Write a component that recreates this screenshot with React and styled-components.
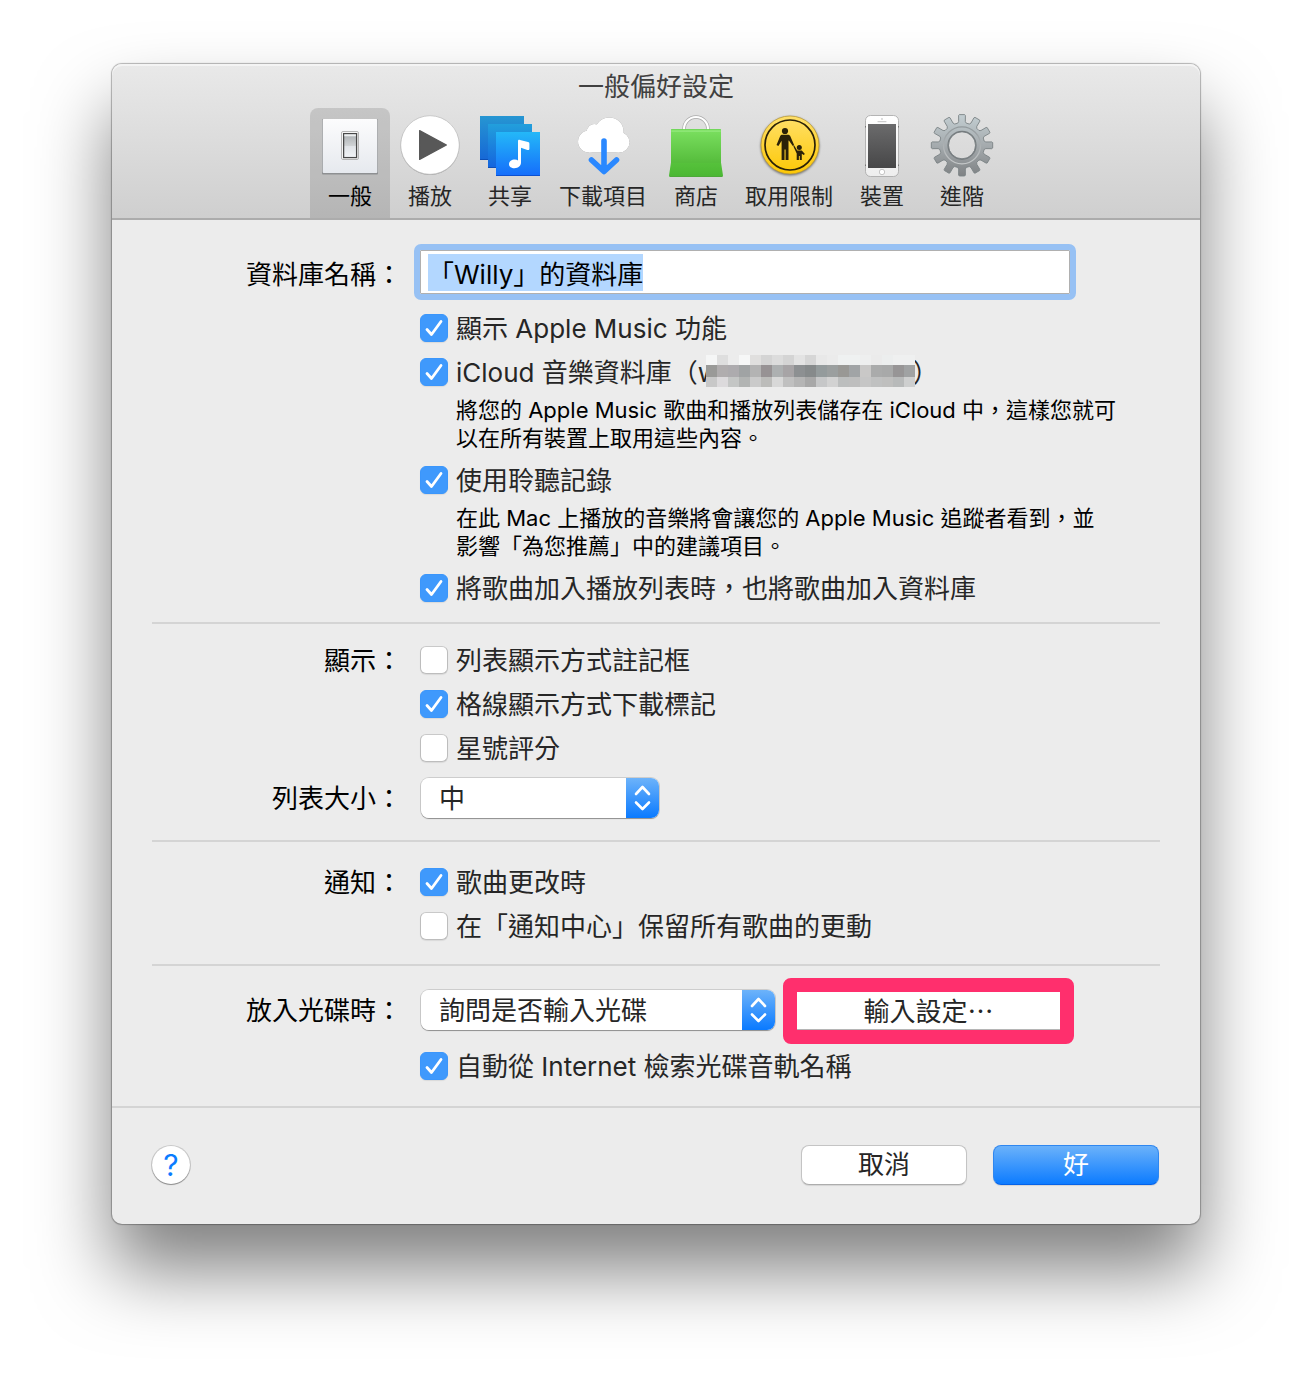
import React, { useEffect, useRef } from "react";
import styled, { createGlobalStyle, css } from "styled-components";

const GlobalStyle = createGlobalStyle`
  *, *::before, *::after { box-sizing: border-box; }
  body {
    margin: 0;
    background: #fff;
    font-family: Inter, "Noto Sans CJK TC", sans-serif;
    font-size: 26px;
    color: #262626;
  }
  button, input, select { font: inherit; color: inherit; }
`;

const Desktop = styled.div`
  padding: 64px 112px 160px;
`;

const Window = styled.main`
  border-radius: 10px;
  background: #ececec;
  box-shadow:
    0 0 1px 1px rgba(0, 0, 0, 0.28),
    0 46px 74px rgba(0, 0, 0, 0.5);
`;

const Header = styled.header`
  border-radius: 10px 10px 0 0;
  border-bottom: 2px solid #acacac;
  background: linear-gradient(#e9e9e9, #cfcfcf);
  box-shadow: inset 0 2px 0 #f4f4f4;
`;

const Title = styled.h1`
  margin: 0;
  height: 44px;
  line-height: 46px;
  font-size: 26px;
  font-weight: 400;
  text-align: center;
  color: #404040;
`;

const Toolbar = styled.nav`
  display: flex;
  justify-content: center;
`;

const Tab = styled.button`
  display: flex;
  flex-direction: column;
  align-items: center;
  min-width: 80px;
  height: 110px;
  padding: 6px 9px 4px;
  border: 0;
  border-radius: 8px 8px 0 0;
  background: ${(p) => (p.$active ? "rgba(0, 0, 0, 0.12)" : "transparent")};
  color: ${(p) => (p.$active ? "#000" : "#262626")};
  font-size: 22px;
  line-height: 36px;
  white-space: nowrap;
`;

const Icon = styled.svg`
  display: block;
  flex: none;
  width: 64px;
  height: 64px;
  margin: 0 -1px;
  overflow: visible;
`;

const Section = styled.section`
  display: grid;
  grid-template-columns: 250px minmax(0, 1fr);
  gap: 8px 18px;
  margin: 0 40px;
  padding: ${(p) => p.$pad};
  border-bottom: ${(p) => (p.$last ? "0" : "2px solid #d4d4d4")};
`;

const rowLabel = css`
  margin: 1px 0 -1px;
  line-height: ${(p) => p.$h}px;
  text-align: right;
  color: #000;
  white-space: nowrap;
`;
const RowLabel = styled.label`
  ${rowLabel}
`;
const RowTitle = styled.span`
  ${rowLabel}
`;

const Stack = styled.div`
  display: flex;
  flex-direction: column;
`;

const NameField = styled.input`
  width: 100%;
  max-width: 650px;
  height: 44px;
  margin: 0 0 12px;
  padding: 0 7px;
  border: 1px solid #b0b0b0;
  border-radius: 0;
  outline: 0;
  background: #fff;
  color: #000;
  &:focus {
    outline: 6px solid #97c1f4;
    border-radius: 1px;
  }
  &::selection {
    background: #b3d7ff;
    color: #000;
  }
`;

const CheckRow = styled.label`
  display: grid;
  grid-template-columns: 28px auto;
  justify-content: start;
  align-items: center;
  column-gap: 8px;
  height: 44px;
  white-space: nowrap;
`;

const Box = styled.input`
  grid-area: 1 / 1;
  appearance: none;
  width: 28px;
  height: 28px;
  margin: 0;
  border: 1px solid #bdbdbd;
  border-top-color: #c9c9c9;
  border-radius: 6px;
  background: #fff;
  box-shadow: 0 1px 1px rgba(0, 0, 0, 0.08);
  &:checked {
    border-color: #3b96fb;
    background: #3f99fc;
  }
  & + svg { visibility: hidden; }
  &:checked + svg { visibility: visible; }
`;

const Tick = styled.svg`
  grid-area: 1 / 1;
  width: 28px;
  height: 28px;
  pointer-events: none;
`;

const CheckText = styled.span`
  display: flex;
  align-items: center;
  padding-top: 2px;
  line-height: 42px;
`;

const Note = styled.p`
  margin: 0;
  padding: 2px 0 6px 36px;
  font-size: 22px;
  line-height: 28px;
  color: #000;
  white-space: nowrap;
`;

const Mosaic = styled.span`
  position: relative;
  display: grid;
  grid-template-columns: repeat(19, 11px);
  grid-auto-rows: 10px 12px 10px;
  margin: 0 -18px 4px -13px;
`;

const Pixel = styled.span`
  background: ${(p) => p.$tone};
`;

const Controls = styled.div`
  display: flex;
  align-items: center;
  gap: 8px;
  padding: ${(p) => p.$pad || "0"};
`;

const SelectWrap = styled.span`
  position: relative;
  display: flex;
  width: ${(p) => p.$w}px;
  height: 40px;
  margin-left: 1px;
  border-radius: 8px;
  box-shadow: 0 1px 1px rgba(0, 0, 0, 0.3), 0 0 0 1px rgba(0, 0, 0, 0.13);
`;

const Select = styled.select`
  appearance: none;
  width: 100%;
  padding: 0 40px 0 18px;
  border: 0;
  border-radius: 8px;
  background: #fff;
`;

const Stepper = styled.svg`
  position: absolute;
  top: 0;
  right: 0;
  width: 33px;
  height: 40px;
  border-radius: 0 8px 8px 0;
  background: linear-gradient(#6db3fa, #0a7aff);
  pointer-events: none;
`;

const Highlight = styled.span`
  display: flex;
  margin: -12px 0 -14px;
  border: 14px solid #ff2f6d;
  border-radius: 8px;
`;

const ImportButton = styled.button`
  width: 263px;
  height: 38px;
  padding: 0 0 2px;
  border: 0;
  border-bottom: 1px solid #b5b5b5;
  background: #fff;
  font-family: "Noto Sans CJK TC", sans-serif;
  line-height: 35px;
`;

const Footer = styled.footer`
  display: flex;
  align-items: center;
  gap: 26px;
  padding: 37px 41px 39px 40px;
  border-top: 2px solid #d4d4d4;
`;

const Help = styled.button`
  width: 38px;
  height: 38px;
  margin-right: auto;
  padding: 0;
  border: 0;
  border-radius: 50%;
  background: #fff;
  box-shadow: 0 1px 1px rgba(0, 0, 0, 0.3), 0 0 0 1px rgba(0, 0, 0, 0.15);
  color: #0a7cff;
  font-size: 30px;
  line-height: 38px;
`;

const Action = styled.button`
  width: 166px;
  height: 40px;
  padding: 0;
  border: 1px solid ${(p) => (p.$primary ? "#2f87f0" : "#c4c4c4")};
  border-bottom-color: ${(p) => (p.$primary ? "#0562e8" : "#adadad")};
  border-radius: 8px;
  background: ${(p) => (p.$primary ? "linear-gradient(#6db3fa, #0a7aff)" : "#fff")};
  background-origin: border-box;
  box-shadow: 0 1px 1px rgba(0, 0, 0, 0.1);
  color: ${(p) => (p.$primary ? "#fff" : "#262626")};
  line-height: 38px;
`;

const GeneralIcon = () => (
  <Icon viewBox="0 0 64 64" aria-hidden="true">
    <defs>
      <linearGradient id="plate" x2="0" y2="1"><stop stopColor="#fcfcfd" /><stop offset="1" stopColor="#e6e9ee" /></linearGradient>
      <linearGradient id="rocker" x2="0" y2="1"><stop stopColor="#a9adb0" /><stop offset=".5" stopColor="#cfd2d4" /><stop offset=".5" stopColor="#dfe2e6" /><stop offset="1" stopColor="#f2f4f7" /></linearGradient>
    </defs>
    <rect x="4" y="5" width="56" height="55.6" rx="1" fill="#8e9092" />
    <rect x="4.7" y="5" width="54.6" height="54" rx="1" fill="url(#plate)" />
    <rect x="23.5" y="17.5" width="17" height="28" rx="1.5" fill="#fff" stroke="#b5b5b5" />
    <rect x="25.6" y="19.6" width="13" height="24" fill="url(#rocker)" stroke="#484848" strokeWidth="1.3" />
    <rect x="26.3" y="20.3" width="11.6" height="2" fill="#eceeef" />
  </Icon>
);

const PlayIcon = () => (
  <Icon viewBox="0 0 64 64" aria-hidden="true">
    <circle cx="32" cy="31.5" r="29.5" fill="#a5a5a5" />
    <circle cx="32" cy="31" r="29.3" fill="#fff" stroke="#bdbdbd" strokeWidth=".7" />
    <path d="M21.6 16.6 48.4 31 21.6 45.4Z" fill="#585858" stroke="#585858" strokeWidth="1.2" strokeLinejoin="round" />
  </Icon>
);

const ShareIcon = () => (
  <Icon viewBox="0 0 64 64" aria-hidden="true">
    <defs>
      <linearGradient id="sh1" x2="0" y2="1"><stop stopColor="#2696d2" /><stop offset="1" stopColor="#1667d6" /></linearGradient>
      <linearGradient id="sh2" x2="0" y2="1"><stop stopColor="#229fdc" /><stop offset="1" stopColor="#1464de" /></linearGradient>
      <linearGradient id="sh3" x2="0" y2="1"><stop stopColor="#24b8f8" /><stop offset="1" stopColor="#156dfb" /></linearGradient>
    </defs>
    <rect x="2" y="2" width="44" height="44" fill="url(#sh1)" />
    <path d="M2 45.5h44" stroke="#0d4fb5" />
    <rect x="10" y="10" width="44" height="44" fill="url(#sh2)" />
    <path d="M10 53.5h44" stroke="#0d4fb5" />
    <rect x="18" y="18" width="44" height="44" fill="url(#sh3)" />
    <path d="M18 61.5h44" stroke="#0c50d0" />
    <path d="M40 27.2c0-1.2.8-1.6 2-1.3l8 2.1c1 .3 1.4.8 1.4 1.7v5c0 1.2-.8 1.6-2 1.2L43 33.8v14.8c0 3.3-2.7 5.6-6.5 5.6-3.2 0-5.5-1.6-5.5-4 0-2.7 2.6-4.6 5.9-4.6 1.3 0 2.3.3 3.100.8Z" fill="#fff" />
  </Icon>
);

const DownloadIcon = () => (
  <Icon viewBox="0 0 64 64" aria-hidden="true">
    <g style={{ filter: "drop-shadow(0 0.6px 0.5px rgba(0,0,0,.45))" }} fill="#fff">
      <circle cx="38.3" cy="17.7" r="14.3" />
      <circle cx="23.3" cy="17.5" r="7.5" />
      <circle cx="18" cy="27.5" r="11" />
      <circle cx="48.3" cy="28.2" r="10.3" />
      <rect x="18" y="18" width="30.3" height="20.5" />
    </g>
    <path d="M33 27v30M20.5 46 33 57.5 45.5 46" fill="none" stroke="#2a88ff" strokeWidth="5.6" strokeLinecap="round" strokeLinejoin="round" />
  </Icon>
);

const StoreIcon = () => (
  <Icon viewBox="0 0 64 64" aria-hidden="true">
    <defs>
      <linearGradient id="bag" x2="0" y2="1"><stop stopColor="#7be060" /><stop offset=".7" stopColor="#56bd3c" /><stop offset=".71" stopColor="#56c23b" /><stop offset="1" stopColor="#4bb733" /></linearGradient>
    </defs>
    <path d="M20 16v-1a12 12 0 0 1 24 0v1" fill="none" stroke="#aaa" strokeWidth="3.4" />
    <path d="M20 16v-1a12 12 0 0 1 24 0v1" fill="none" stroke="#fff" strokeWidth="2.2" />
    <path d="M7 15.3h50V48.5L59 61.5q0 1.2-1.2 1.2H6.2Q5 62.700 5 61.5L7 48.5Z" fill="url(#bag)" />
    <path d="M7.3 15.9h49.4" stroke="#5fd344" strokeWidth="1" />
    <path d="M7.3 17h49.4" stroke="#a0ee8b" strokeWidth="1" />
    <path d="M5.6 62.5h52.8" stroke="#3f9f2a" strokeWidth=".7" />
  </Icon>
);

const ParentalIcon = () => (
  <Icon viewBox="0 0 64 64" aria-hidden="true">
    <defs>
      <linearGradient id="sign" x2="0" y2="1"><stop stopColor="#ffe06a" /><stop offset="1" stopColor="#fdc805" /></linearGradient>
    </defs>
    <g style={{ filter: "drop-shadow(0 1px 0.8px rgba(0,0,0,.5))" }}>
      <circle cx="33" cy="31" r="29" fill="url(#sign)" stroke="#b99b3c" strokeWidth=".8" />
    </g>
    <circle cx="33" cy="31" r="25" fill="none" stroke="#2a2108" strokeWidth="1.7" />
    <g fill="#2a2108">
      <circle cx="28" cy="17" r="3.1" />
      <path d="M24.5 20.8h7.2l1.4 1 4.1 9.5-1.4.8-3.9-5.6-.4.2V46h-2.9V35.5h-1.1V46h-2.9V26.7l-3.2 5.2-1.9-.9 3.8-9.2Z" />
      <circle cx="42.3" cy="33.5" r="2.5" />
      <path d="m37.2 31.5 3 4.9h4.600l3.1 3.7-1.2 1-1.9-1.3V46h-2v-4h-.9v4h-2.2v-6.5l-3.3-6.9Z" />
    </g>
  </Icon>
);

const DeviceIcon = () => (
  <Icon viewBox="0 0 64 64" aria-hidden="true">
    <defs>
      <linearGradient id="glass" x2="0" y2="1"><stop stopColor="#6b6b6c" /><stop offset="1" stopColor="#474748" /></linearGradient>
      <linearGradient id="shell" x2="0" y2="1"><stop stopColor="#fff" /><stop offset="1" stopColor="#eee" /></linearGradient>
    </defs>
    <rect x="15.5" y="1.5" width="33" height="61" rx="5" fill="url(#shell)" stroke="#adadad" strokeWidth=".9" />
    <path d="M15.5 12v1.5m0 37v1.5M48.5 12v1.5m0 37v1.5" stroke="#777" strokeWidth="1" />
    <rect x="18" y="10" width="28" height="44" fill="url(#glass)" />
    <circle cx="32" cy="5" r=".9" fill="#ccc" />
    <path d="M28 7.7h8" stroke="#bbb" strokeWidth=".9" strokeLinecap="round" />
    <circle cx="32" cy="58" r="2.7" fill="#fff" stroke="#b8b8b8" strokeWidth=".8" />
  </Icon>
);

const gearOutline = (() => {
  const points = [];
  const at = (deg, r) => {
    const a = (deg * Math.PI) / 180;
    points.push(`${(32 + r * Math.cos(a)).toFixed(2)} ${(31.3 + r * Math.sin(a)).toFixed(2)}`);
  };
  for (let i = 0; i < 12; i += 1) {
    const c = i * 30 - 90;
    at(c - 11, 22.5);
    at(c - 8, 24);
    at(c - 6.5, 30);
    at(c - 5, 30.8);
    at(c + 5, 30.8);
    at(c + 6.5, 30);
    at(c + 8, 24);
    at(c + 11, 22.5);
  }
  return `M${points.join("L")}Z`;
})();

const AdvancedIcon = () => (
  <Icon viewBox="0 0 64 64" aria-hidden="true">
    <defs>
      <linearGradient id="gear" x2="0" y2="1"><stop stopColor="#c3ced2" /><stop offset=".5" stopColor="#a5abae" /><stop offset="1" stopColor="#7f8284" /></linearGradient>
      <linearGradient id="rim" x2="0" y2="1"><stop stopColor="#92999c" /><stop offset="1" stopColor="#c5c8c9" /></linearGradient>
    </defs>
    <path d={`${gearOutline}M45.5 31.3a13.5 13.5 0 1 0-27 0 13.5 13.5 0 1 0 27 0Z`} fillRule="evenodd" fill="url(#gear)" stroke="#7b8285" strokeWidth=".9" strokeLinejoin="round" />
    <circle cx="32" cy="31.3" r="18.5" fill="none" stroke="url(#rim)" strokeWidth="1.3" />
    <circle cx="32" cy="31.3" r="14" fill="none" stroke="#767c7f" strokeWidth="1.2" />
  </Icon>
);

const tabs = [
  { label: "一般", Art: GeneralIcon },
  { label: "播放", Art: PlayIcon },
  { label: "共享", Art: ShareIcon },
  { label: "下載項目", Art: DownloadIcon },
  { label: "商店", Art: StoreIcon },
  { label: "取用限制", Art: ParentalIcon },
  { label: "裝置", Art: DeviceIcon },
  { label: "進階", Art: AdvancedIcon },
];

const pixelTones = [
  "#f5f6f6 #dedede #ececec #f6f7f7 #e0dfde #d4d4d4 #dcdcdc #d4d4d4 #e3e3e3 #d6d6d6 #e8e8e8 #ebebeb #eff1f1 #eff1f1 #eeefef #ebebeb #eceeee #eff0f0 #eff0f0",
  "#9a9a98 #b0adae #adabae #a0a3a4 #b3b3b3 #979294 #adb0b1 #a7a4a6 #8d9092 #868a8b #949b9c #9b9f9f #999895 #a1a4a6 #c9c8c7 #aaabab #a8a9a9 #979596 #a0a2a3",
  "#c8c8c8 #dcdadc #c4c6c5 #b2b4b3 #cacaca #bcbcba #d8d8d8 #c0c0c0 #b5b5b5 #a8a8a8 #c6c7c8 #d2d2d2 #bcbebe #bebebe #c6c6c6 #c0c1c1 #bfbfbe #b8baba #cecfcf",
].flatMap((row) => row.split(" "));

function Check({ children, on }) {
  return (
    <CheckRow>
      <Box type="checkbox" defaultChecked={on} />
      <Tick viewBox="0 0 28 28" aria-hidden="true">
        <path d="M7 15.5 11.5 20.5 21 7.5" fill="none" stroke="#fff" strokeWidth="2.8" strokeLinecap="round" strokeLinejoin="round" />
      </Tick>
      <CheckText>{children}</CheckText>
    </CheckRow>
  );
}

function Popup({ id, width, options }) {
  return (
    <SelectWrap $w={width}>
      <Select id={id}>
        {options.map((o) => <option key={o}>{o}</option>)}
      </Select>
      <Stepper viewBox="0 0 33 40" aria-hidden="true">
        <path d="M10 16 16.5 9 23 16M10 24.5 16.5 31 23 24.5" fill="none" stroke="#fff" strokeWidth="2.6" strokeLinecap="round" strokeLinejoin="round" />
      </Stepper>
    </SelectWrap>
  );
}

export default function App() {
  const nameRef = useRef(null);
  useEffect(() => {
    nameRef.current.focus();
    nameRef.current.select();
  }, []);

  return (
    <Desktop lang="zh-Hant">
      <GlobalStyle />
      <Window>
        <Header>
          <Title>一般偏好設定</Title>
          <Toolbar>
            {tabs.map(({ label, Art }, i) => (
              <Tab key={label} type="button" $active={i === 0}>
                <Art />
                {label}
              </Tab>
            ))}
          </Toolbar>
        </Header>

        <Section $pad="30px 0 12px">
          <RowLabel htmlFor="library-name" $h={48}>資料庫名稱：</RowLabel>
          <Stack>
            <NameField id="library-name" ref={nameRef} defaultValue="「Willy」的資料庫" />
            <Check on>顯示 Apple Music 功能</Check>
            <Check on>
              iCloud 音樂資料庫（w
              <Mosaic aria-hidden="true">
                {pixelTones.map((tone, i) => <Pixel key={i} $tone={tone} />)}
              </Mosaic>
              n）
            </Check>
            <Note>
              將您的 Apple Music 歌曲和播放列表儲存在 iCloud 中，這樣您就可
              <br />
              以在所有裝置上取用這些內容。
            </Note>
            <Check on>使用聆聽記錄</Check>
            <Note>
              在此 Mac 上播放的音樂將會讓您的 Apple Music 追蹤者看到，並
              <br />
              影響「為您推薦」中的建議項目。
            </Note>
            <Check on>將歌曲加入播放列表時，也將歌曲加入資料庫</Check>
          </Stack>
        </Section>

        <Section $pad="14px 0 22px">
          <RowTitle $h={44}>顯示：</RowTitle>
          <Stack>
            <Check>列表顯示方式註記框</Check>
            <Check on>格線顯示方式下載標記</Check>
            <Check>星號評分</Check>
          </Stack>
          <RowLabel htmlFor="list-size" $h={40}>列表大小：</RowLabel>
          <Controls>
            <Popup id="list-size" width={238} options={["中", "小", "大"]} />
          </Controls>
        </Section>

        <Section $pad="18px 0 16px">
          <RowTitle $h={44}>通知：</RowTitle>
          <Stack>
            <Check on>歌曲更改時</Check>
            <Check>在「通知中心」保留所有歌曲的更動</Check>
          </Stack>
        </Section>

        <Section $pad="24px 0 18px" $last>
          <RowLabel htmlFor="disc-action" $h={40}>放入光碟時：</RowLabel>
          <Stack>
            <Controls $pad="0 0 14px">
              <Popup id="disc-action" width={354} options={["詢問是否輸入光碟", "輸入光碟", "顯示光碟"]} />
              <Highlight>
                <ImportButton type="button">輸入設定…</ImportButton>
              </Highlight>
            </Controls>
            <Check on>自動從 Internet 檢索光碟音軌名稱</Check>
          </Stack>
        </Section>

        <Footer>
          <Help type="button" aria-label="輔助說明">?</Help>
          <Action type="button">取消</Action>
          <Action type="button" $primary>好</Action>
        </Footer>
      </Window>
    </Desktop>
  );
}
